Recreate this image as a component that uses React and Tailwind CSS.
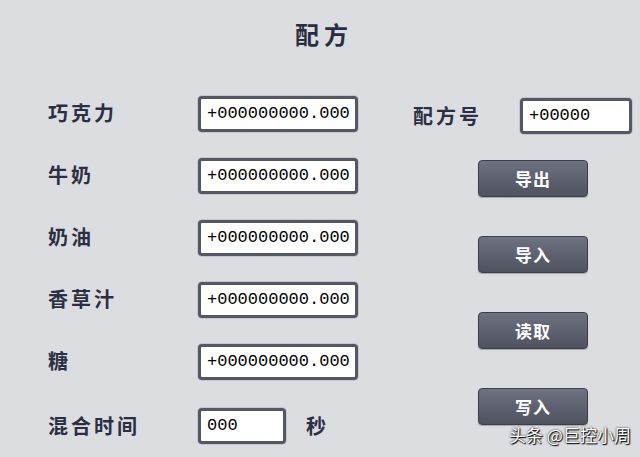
// Recipe (配方) parameter panel
const fieldBox =
  'h-[36px] bg-white border-[3px] border-[#545865] rounded-[4px] flex items-center pl-[6px] text-[17px] text-black shadow-[0_0_0_1px_#c4c6cc]';
const monoFont = { fontFamily: '"Liberation Mono", "DejaVu Sans Mono", monospace' };
const cjk = { fontFamily: '"Noto Sans CJK SC", "Noto Sans", sans-serif' };

const Field = ({ value, width }) => (
  <div className={`${fieldBox} ${width}`} style={monoFont}>
    {value}
  </div>
);

const ActionButton = ({ label }) => (
  <button
    className="w-[110px] h-[37px] rounded-[4px] border border-[#3c3e48] bg-gradient-to-b from-[#6e7180] to-[#4f525f] text-white text-[17px] font-bold tracking-[1px] shadow-[0_1px_1px_rgba(0,0,0,0.25)]"
    style={cjk}
  >
    {label}
  </button>
);

const ingredients = ['巧克力', '牛奶', '奶油', '香草汁', '糖'];

export default function App() {
  return (
    <div className="relative w-[640px] h-[457px] bg-[#dcdde1] overflow-hidden" style={cjk}>
      <h1 className="pt-[17px] text-center text-[24px] font-bold text-[#2a2d40] tracking-[5px] leading-[34px] pl-[8px]">
        配方
      </h1>

      <div className="flex mt-[45px]">
        {/* ingredient rows */}
        <div className="pl-[48px] flex flex-col gap-[26px]">
          {ingredients.map((name) => (
            <div key={name} className="flex items-center">
              <span className="w-[150px] text-[20px] font-bold text-[#2c2f42] tracking-[3px] -mt-[3px]">
                {name}
              </span>
              <Field value="+000000000.000" width="w-[160px]" />
            </div>
          ))}
          <div className="flex items-center mt-[2px]">
            <span className="w-[150px] text-[20px] font-bold text-[#2c2f42] tracking-[3px]">
              混合时间
            </span>
            <Field value="000" width="w-[88px]" />
            <span className="ml-[20px] text-[20px] font-bold text-[#2c2f42]">秒</span>
          </div>
        </div>

        {/* recipe number + actions */}
        <div className="ml-[55px] pt-[2px] flex flex-col">
          <div className="flex items-center">
            <span className="w-[107px] text-[20px] font-bold text-[#2c2f42] tracking-[3px]">
              配方号
            </span>
            <Field value="+00000" width="w-[112px]" />
          </div>
          <div className="ml-[65px] mt-[26px] flex flex-col gap-[39px]">
            <ActionButton label="导出" />
            <ActionButton label="导入" />
            <ActionButton label="读取" />
            <ActionButton label="写入" />
          </div>
        </div>
      </div>

      <div
        className="absolute left-[509px] top-[422px] text-[17px] text-white [text-shadow:0_0_2px_#000,1px_1px_1px_#000]"
        style={cjk}
      >
        头条 @巨控小周
      </div>
    </div>
  );
}
